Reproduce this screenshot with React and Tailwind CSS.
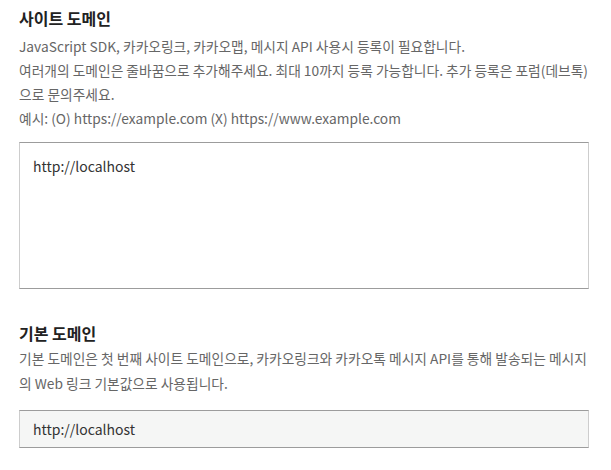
export default function App() {
  return (
    <div className="w-[611px] h-[470px] bg-white px-[19px] pt-[7px] font-['Noto_Sans_CJK_KR','Noto_Sans',sans-serif]">
      <h2 className="text-[16px] leading-[22px] font-bold text-[#222]">사이트 도메인</h2>
      <p className="mt-[5px] text-[13.75px] leading-[24px] text-[#666]">
        JavaScript SDK, 카카오링크, 카카오맵, 메시지 API 사용시 등록이 필요합니다.
        <br />
        여러개의 도메인은 줄바꿈으로 추가해주세요. 최대 10까지 등록 가능합니다. 추가 등록은 포럼(데브톡)
        <br />
        으로 문의주세요.
        <br />
        예시: (O) https://example.com (X) https://www.example.com
      </p>
      <textarea
        readOnly
        defaultValue="http://localhost"
        className="mt-[12px] block w-[570px] h-[147px] resize-none border-y border-x border-y-[#9c9c9c] border-x-[#cdcdcd] bg-white px-[13px] pt-[13px] text-[14px] leading-[20px] text-[#333] outline-none font-['Noto_Sans_CJK_KR','Noto_Sans',sans-serif]"
      />
      <h2 className="mt-[33px] text-[16px] leading-[22px] font-bold text-[#222]">기본 도메인</h2>
      <p className="mt-[2px] text-[13.75px] leading-[25px] text-[#666]">
        기본 도메인은 첫 번째 사이트 도메인으로, 카카오링크와 카카오톡 메시지 API를 통해 발송되는 메시지
        <br />
        의 Web 링크 기본값으로 사용됩니다.
      </p>
      <input
        readOnly
        value="http://localhost"
        className="mt-[14px] block w-[570px] h-[38px] border-y border-x border-y-[#9c9c9c] border-x-[#cdcdcd] bg-[#f5f6f5] px-[13px] text-[14px] text-[#333] outline-none font-['Noto_Sans_CJK_KR','Noto_Sans',sans-serif]"
      />
    </div>
  );
}
